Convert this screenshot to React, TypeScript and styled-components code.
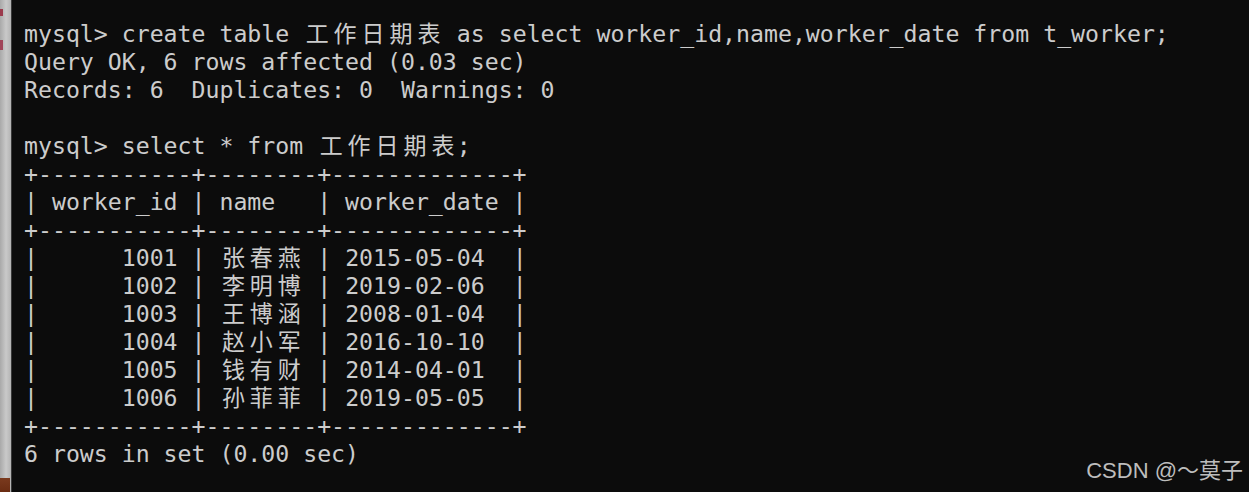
import React from "react";
import styled, { createGlobalStyle } from "styled-components";

const CELL = 13.97;

const Global = createGlobalStyle`
  html, body { margin: 0; padding: 0; background: #0c0c0c; }
  body { width: 1249px; height: 492px; overflow: hidden; }
`;

const Page = styled.div`
  position: relative;
  display: flex;
  width: 1249px;
  height: 492px;
  overflow: hidden;
`;

const SideStrip = styled.div`
  flex: 0 0 11px;
  height: 100%;
  border-right: 1px solid #3a3a3a;
  background:
    linear-gradient(#9b3a4c, #9b3a4c) 0 9px / 3px 7px no-repeat,
    linear-gradient(#a04458, #a04458) 0 40px / 3px 10px no-repeat,
    linear-gradient(#7a3a1e, #6a2c12) 0 478px / 10px 14px no-repeat,
    linear-gradient(to right, #a9a9a9, #c9c9c9 55%, #b4b4b4);
`;

const Terminal = styled.div`
  flex: 1;
  background: #0c0c0c;
  padding: 20px 0 0 12px;
  font-family: "DejaVu Sans Mono", "Liberation Mono", monospace;
  font-size: 23.2px;
  line-height: 28px;
  color: #cccccc;
`;

const Line = styled.div`
  white-space: pre;
  height: 28px;
`;

const Wide = styled.span`
  display: inline-block;
  width: ${CELL * 2}px;
  text-align: center;
  font-family: "Noto Sans CJK SC", sans-serif;
  font-size: 23px;
  line-height: 24px;
`;

const Watermark = styled.div`
  position: absolute;
  right: 6px;
  bottom: 9px;
  font-family: "Liberation Sans", "Noto Sans CJK SC", sans-serif;
  font-size: 22px;
  line-height: 24px;
  color: #bdbdbd;
  white-space: pre;
`;

const CJK = /[\u3000-\u9fff\uff00-\uffef]/;

function renderLine(text: string) {
  const parts: React.ReactNode[] = [];
  let buf = "";
  Array.from(text).forEach((ch, i) => {
    if (CJK.test(ch)) {
      if (buf) {
        parts.push(buf);
        buf = "";
      }
      parts.push(<Wide key={i}>{ch}</Wide>);
    } else {
      buf += ch;
    }
  });
  if (buf) parts.push(buf);
  return parts;
}

const lines = [
  "mysql> create table 工作日期表 as select worker_id,name,worker_date from t_worker;",
  "Query OK, 6 rows affected (0.03 sec)",
  "Records: 6  Duplicates: 0  Warnings: 0",
  "",
  "mysql> select * from 工作日期表;",
  "+-----------+--------+-------------+",
  "| worker_id | name   | worker_date |",
  "+-----------+--------+-------------+",
  "|      1001 | 张春燕 | 2015-05-04  |",
  "|      1002 | 李明博 | 2019-02-06  |",
  "|      1003 | 王博涵 | 2008-01-04  |",
  "|      1004 | 赵小军 | 2016-10-10  |",
  "|      1005 | 钱有财 | 2014-04-01  |",
  "|      1006 | 孙菲菲 | 2019-05-05  |",
  "+-----------+--------+-------------+",
  "6 rows in set (0.00 sec)",
];

export default function App() {
  return (
    <Page>
      <Global />
      <SideStrip />
      <Terminal>
        {lines.map((l, i) => (
          <Line key={i}>{renderLine(l)}</Line>
        ))}
      </Terminal>
      <Watermark>CSDN @～莫子</Watermark>
    </Page>
  );
}
